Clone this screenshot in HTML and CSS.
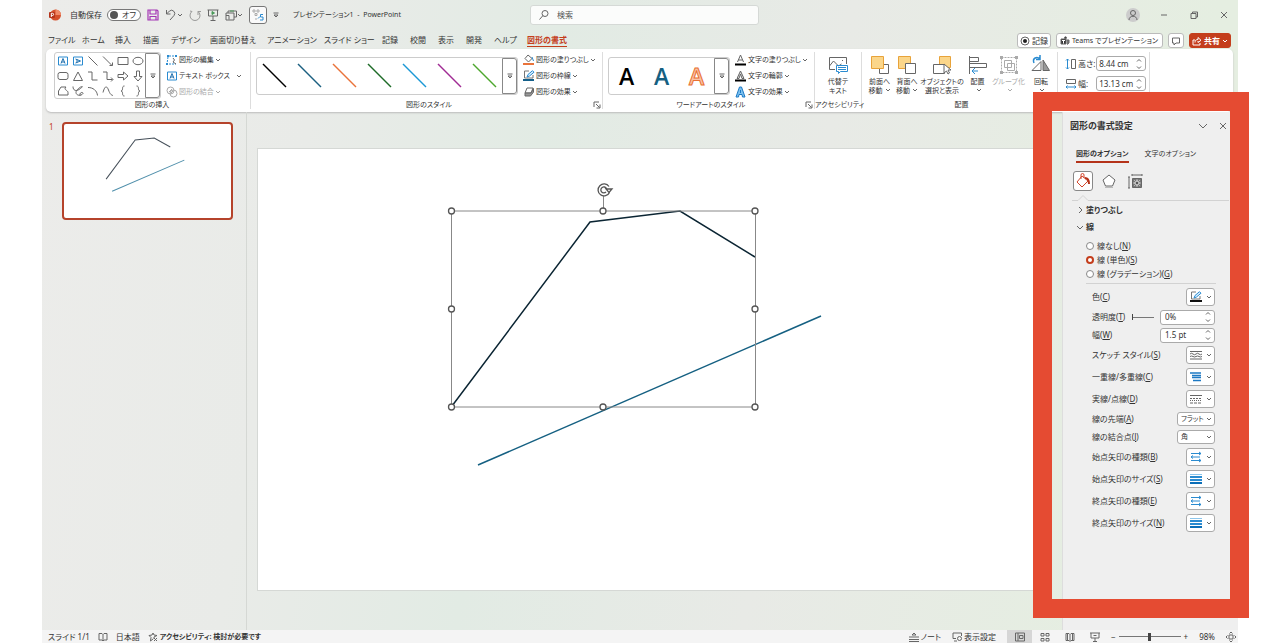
FILE: index.html
```html
<!DOCTYPE html>
<html lang="ja">
<head>
<meta charset="utf-8">
<title>プレゼンテーション1 - PowerPoint</title>
<link rel="stylesheet" href="styles.css">
</head>
<body>
<svg class="defs" width="0" height="0" aria-hidden="true">
  <symbol id="chev" viewBox="0 0 6 6"><path d="M1 2l2 2 2-2"/></symbol>
  <symbol id="more" viewBox="0 0 6 6"><path d="M.5 1h5M1 3l2 2 2-2z"/></symbol>
  <symbol id="spin" viewBox="0 0 6 12"><path d="M1 3.500l2-2 2 2M1 8.500l2 2 2-2"/></symbol>
  <symbol id="launch" viewBox="0 0 8 8"><path d="M1 6V1h5M3 3l3.500 3.500M7 3.500V7H3.500"/></symbol>
  <symbol id="sel-arrow" viewBox="0 0 12 12"><g fill="none" stroke="#2a8bd0"><path d="M1 2.500h10M1 6h9M1 9.500h10"/><path d="M9 1l2 1.500L9 4M3 4.500L1 6l2 1.500M9 8l2 1.500L9 11"/></g></symbol>
  <symbol id="sel-size" viewBox="0 0 12 12"><path fill="#8cc6ec" stroke="none" d="M0 1h12v1H0z"/><path fill="#2a8bd0" stroke="none" d="M0 3h12v2H0zM0 6h12v2H0z"/><path fill="#0c6fb8" stroke="none" d="M0 9h12v2H0z"/></symbol>
  <symbol id="pen" viewBox="0 0 12 12"><path d="M6 1H1.500v7H10V5" stroke="#777"/><path d="M4 7l1-2.500L9.500.7l1.500 1.500L6.500 6z" fill="#d9efff" stroke="#2a8bd0"/></symbol>
</svg>

<div class="app">
  <header class="titlebar">
    <div class="quick">
      <svg class="ic12 logo" viewBox="0 0 12 12"><circle cx="6.500" cy="6" r="5.500" fill="#d5502c" stroke="none"/><path d="M6.500.5A5.500 5.500 0 0 1 12 6H6.500z" fill="#f08a68" stroke="none"/><rect x="0" y="3" width="6" height="6" rx="1" fill="#b5331a" stroke="none"/><path d="M2.300 8V4.300h1.200a1 1 0 0 1 0 2.200H2.300" stroke="#fff"/></svg>
      <label class="autosave" for="auto">自動保存</label>
      <button class="toggle" id="auto" role="switch" aria-checked="false"><i></i><span>オフ</span></button>
      <button class="plain" aria-label="保存"><svg class="ic12" viewBox="0 0 12 12"><path d="M1 1h9l1 1v9H1zM3 1v4h6V1M3 11V7.500h6V11" stroke="#a436b5" stroke-width="1.200"/></svg></button>
      <button class="plain" aria-label="元に戻す"><svg class="ic12" viewBox="0 0 12 12"><path d="M1.500 1v4h4M1.500 5L4.500 2a3.200 3.200 0 0 1 4.500 4.500L5 11"/></svg><svg class="ic6"><use href="#chev"/></svg></button>
      <button class="plain" aria-label="やり直し"><svg class="ic12 dim" viewBox="0 0 12 12"><path d="M3 2.500a5 5 0 1 0 6 0M9 6V2.500h3M3 2.500L1 2"/></svg></button>
      <button class="plain" aria-label="最初から開始"><svg class="ic12" viewBox="0 0 12 12"><path d="M.5 1h11M1.500 1v6h9V1M6 7v4M3.500 11.500h5"/><path d="M5 2.500v3L7.500 4z" fill="#4a9a5a" stroke="#4a9a5a"/></svg></button>
      <button class="plain" aria-label="図形"><svg class="ic12" viewBox="0 0 12 12"><path d="M1 4h8v7H1zM3 4V2h8.500v6H9M1 6.500h3v4"/><path d="M5 2h4" stroke="#4a9a5a"/></svg><svg class="ic6"><use href="#chev"/></svg></button>
      <button class="boxed" aria-label="配置"><svg class="ic12" viewBox="0 0 12 12"><path d="M1 1h2v2H1zM5 1h2v2H5zM3 4.500h2v2H3z" stroke="#aaa"/><path d="M6 9.500l2-2M11 5.500H8.500v2.500H11v3H8" stroke="#2a8bd0"/><path d="M4 9v2" stroke="#aaa"/></svg></button>
      <button class="plain" aria-label="カスタマイズ"><svg class="ic6"><use href="#more"/></svg></button>
      <h1 class="doc">プレゼンテーション1&nbsp; -&nbsp; PowerPoint</h1>
    </div>
    <label class="search"><svg class="ic12" viewBox="0 0 12 12"><circle cx="7" cy="4.500" r="3"/><path d="M5 6.500L1.500 10.500"/></svg><input type="search" placeholder="検索" aria-label="検索"></label>
    <div class="wincontrols">
      <button class="avatar" aria-label="アカウント"><svg class="ic12" viewBox="0 0 12 12"><circle cx="6" cy="4" r="2.500"/><path d="M2 11c0-5 8-5 8 0"/></svg></button>
      <button class="plain" aria-label="最小化"><svg class="ic12" viewBox="0 0 12 12"><path d="M3 6h6"/></svg></button>
      <button class="plain" aria-label="元に戻す"><svg class="ic12" viewBox="0 0 12 12"><path d="M3 4.500h5v5H3zM4.500 4.500V3h5v5H8"/></svg></button>
      <button class="plain" aria-label="閉じる"><svg class="ic12" viewBox="0 0 12 12"><path d="M3 3l6 6M9 3L3 9"/></svg></button>
    </div>
  </header>

  <div class="tabrow">
    <nav class="tabs">
      <a href="#">ファイル</a><a href="#">ホーム</a><a href="#">挿入</a><a href="#">描画</a><a href="#">デザイン</a><a href="#">画面切り替え</a><a href="#">アニメーション</a><a href="#">スライド ショー</a><a href="#">記録</a><a href="#">校閲</a><a href="#">表示</a><a href="#">開発</a><a href="#">ヘルプ</a><a href="#" class="current">図形の書式</a>
    </nav>
    <div class="actions">
      <button><svg class="ic10" viewBox="0 0 10 10"><circle cx="5" cy="5" r="4"/><circle cx="5" cy="5" r="2" fill="#222" stroke="none"/></svg>記録</button>
      <button class="teams"><svg class="ic10" viewBox="0 0 10 10"><path d="M1 3h5v5H1z" fill="#333"/><circle cx="5.500" cy="1.800" r="1" fill="#333"/><path d="M6.500 4H9v3L7 8.500" fill="#777"/><path d="M2 4.500h3M3.500 4.500v3" stroke="#fff"/></svg>Teams でプレゼンテーション</button>
      <button aria-label="コメント"><svg class="ic10" viewBox="0 0 10 10"><path d="M1.500 2h7v5H5L3 9V7H1.500z"/></svg></button>
      <button class="share"><svg class="ic10" viewBox="0 0 10 10"><path d="M3 4H1v5h7V7M3 6.500c0-2 1-3 3-3V1.500L9 4.300 6 6.500V5"/></svg>共有<svg class="ic6"><use href="#chev"/></svg></button>
    </div>
  </div>

  <section class="ribbon">
    <div class="group g-insert">
      <div class="body">
        <div class="gallery shapes">
          <div class="shapegrid">
            <button aria-label="テキスト"><svg viewBox="0 0 12 12"><path d="M1.500 2h9v8h-9z" stroke="#2a8bd0"/><path d="M4 8.500L6 3.500l2 5M4.500 7h3" stroke="#1c6fae"/></svg></button>
            <button aria-label="縦書き"><svg viewBox="0 0 12 12"><path d="M1.500 2h9v8h-9z" stroke="#2a8bd0"/><path d="M3.500 4l5 2-5 2M5 4.500v3" stroke="#1c6fae"/></svg></button>
            <button aria-label="線"><svg viewBox="0 0 12 12"><path d="M1.500 1.500l9 9"/></svg></button>
            <button aria-label="矢印"><svg viewBox="0 0 12 12"><path d="M1 1.500l9 9M7.500 10.500H10.500V7.500"/></svg></button>
            <button aria-label="四角形"><svg viewBox="0 0 12 12"><path d="M1 2.500h10v7H1z"/></svg></button>
            <button aria-label="楕円"><svg viewBox="0 0 12 12"><ellipse cx="6" cy="6" rx="5" ry="3.700"/></svg></button>
            <button aria-label="角丸"><svg viewBox="0 0 12 12"><rect x="1" y="2.500" width="10" height="7" rx="2"/></svg></button>
            <button aria-label="三角形"><svg viewBox="0 0 12 12"><path d="M6 2l4.500 8.500h-9z"/></svg></button>
            <button aria-label="カギ線"><svg viewBox="0 0 12 12"><path d="M1 2h4v8h5.500"/></svg></button>
            <button aria-label="カギ線矢印"><svg viewBox="0 0 12 12"><path d="M1 2h4v7.500h5.500M9 7.500l2 2-2 2"/></svg></button>
            <button aria-label="右矢印"><svg viewBox="0 0 12 12"><path d="M1 4.500h5.500V2L11 6l-4.500 4V7.500H1z"/></svg></button>
            <button aria-label="下矢印"><svg viewBox="0 0 12 12"><path d="M4.500 1v5.500H2L6 11l4-4.500H7.500V1z"/></svg></button>
            <button aria-label="フリーフォーム"><svg viewBox="0 0 12 12"><path d="M4 2h5c-3 3 2 3 2 5.500V10H1.500V6z"/></svg></button>
            <button aria-label="フリーハンド"><svg viewBox="0 0 12 12"><path d="M1 1.500c0 4 3 5 6 3s4-3 3-3-6 3-6 6 5 4 7 1c0-2-4-1-3 2"/></svg></button>
            <button aria-label="円弧"><svg viewBox="0 0 12 12"><path d="M1 2.500c5 0 9 3 9.500 8"/></svg></button>
            <button aria-label="曲線"><svg viewBox="0 0 12 12"><path d="M1 7.500C3 0 5 1 6.500 5S9 10 11 10.500"/></svg></button>
            <button aria-label="左中かっこ"><svg viewBox="0 0 12 12"><path d="M7.500 1C4 1 7 5.500 4 6c3 .5 0 5 3.500 5"/></svg></button>
            <button aria-label="右中かっこ"><svg viewBox="0 0 12 12"><path d="M4.500 1C8 1 5 5.500 8 6c-3 .5 0 5-3.500 5"/></svg></button>
          </div>
          <button class="morebtn" aria-label="その他"><svg class="ic6"><use href="#more"/></svg></button>
        </div>
        <div class="cmds">
          <button><svg class="ic12" viewBox="0 0 12 12"><path d="M3 2h7M2 3L1 10M3 10h7" stroke="#2a8bd0" stroke-dasharray="2 1"/><path d="M7 4l1.500 2L7 8l3 2"/><path d="M1 1h2v2H1zM9 1h2v2H9zM0 9h2v2H0z" fill="#2a8bd0" stroke="none"/></svg>図形の編集<svg class="ic6"><use href="#chev"/></svg></button>
          <button class="wide"><svg class="ic12" viewBox="0 0 12 12"><path d="M1.500 2h9v8h-9z" stroke="#2a8bd0"/><path d="M4 8.500L6 3.500l2 5M4.500 7h3" stroke="#1c6fae"/></svg><span>テキスト ボックス</span><svg class="ic6"><use href="#chev"/></svg></button>
          <button class="off" disabled><svg class="ic12" viewBox="0 0 12 12"><circle cx="4.500" cy="4.500" r="3.500"/><circle cx="7.500" cy="7.500" r="3.500"/><path d="M4.500 7.500l3-3M3 6l3-3"/></svg>図形の結合<svg class="ic6"><use href="#chev"/></svg></button>
        </div>
      </div>
      <div class="caption">図形の挿入</div>
    </div>

    <div class="group g-style">
      <div class="body">
        <div class="gallery low">
          <button class="swatch" aria-label="黒"><svg viewBox="0 0 25 25"><path d="M1 1l23 23" stroke="#000"/></svg></button>
          <button class="swatch" aria-label="青"><svg viewBox="0 0 25 25"><path d="M1 1l23 23" stroke="#1a5f80"/></svg></button>
          <button class="swatch" aria-label="オレンジ"><svg viewBox="0 0 25 25"><path d="M1 1l23 23" stroke="#e9733a"/></svg></button>
          <button class="swatch" aria-label="緑"><svg viewBox="0 0 25 25"><path d="M1 1l23 23" stroke="#1d6b27"/></svg></button>
          <button class="swatch" aria-label="水色"><svg viewBox="0 0 25 25"><path d="M1 1l23 23" stroke="#1b98d5"/></svg></button>
          <button class="swatch" aria-label="紫"><svg viewBox="0 0 25 25"><path d="M1 1l23 23" stroke="#a02b93"/></svg></button>
          <button class="swatch" aria-label="黄緑"><svg viewBox="0 0 25 25"><path d="M1 1l23 23" stroke="#4ea72e"/></svg></button>
          <button class="morebtn" aria-label="その他"><svg class="ic6"><use href="#more"/></svg></button>
        </div>
        <div class="cmds">
          <button><svg class="ic12" viewBox="0 0 12 12"><path d="M5 1l4 3.500L5.500 8 2 4.500z"/><path d="M9 3l1.500 4" stroke="#2a8bd0"/><path d="M0 9h11v2H0z" fill="#e9733a" stroke="none"/></svg>図形の塗りつぶし<svg class="ic6"><use href="#chev"/></svg></button>
          <button><svg class="ic12" viewBox="0 0 12 12"><use href="#pen"/><path d="M0 9h11v2H0z" fill="#15608a" stroke="none"/></svg>図形の枠線<svg class="ic6"><use href="#chev"/></svg></button>
          <button><svg class="ic12" viewBox="0 0 12 12"><path d="M4 2h6L8 7H2z"/><path d="M2 7v3h5.500L10.500 6V2.500L8 7z" fill="#999"/></svg>図形の効果<svg class="ic6"><use href="#chev"/></svg></button>
        </div>
      </div>
      <div class="caption">図形のスタイル</div>
      <button class="launcher" aria-label="図形の書式設定"><svg><use href="#launch"/></svg></button>
    </div>

    <div class="group g-art">
      <div class="body">
        <div class="gallery low">
          <button class="art">A</button><button class="art blue">A</button><button class="art orange">A</button>
          <button class="morebtn" aria-label="その他"><svg class="ic6"><use href="#more"/></svg></button>
        </div>
        <div class="cmds">
          <button><svg class="ic12" viewBox="0 0 12 12"><path d="M2.500 8L5.500 1l3 7M3.500 6h4"/><path d="M0 9.500h11v2H0z" fill="#000" stroke="none"/></svg>文字の塗りつぶし<svg class="ic6"><use href="#chev"/></svg></button>
          <button><svg class="ic12" viewBox="0 0 12 12"><path d="M2 8.500L5.500 1 9 8.500H7L5.500 4 4 8.500z" fill="#ddd"/><path d="M0 9.500h11v2H0z" fill="#000" stroke="none"/></svg>文字の輪郭<svg class="ic6"><use href="#chev"/></svg></button>
          <button><svg class="ic12" viewBox="0 0 12 12"><path d="M1 11L4.500 1h2L10 11H7.500L7 8.500H4L3.500 11zM5.500 4v3" fill="#7cc1f0" stroke="#1c79c4"/></svg>文字の効果<svg class="ic6"><use href="#chev"/></svg></button>
        </div>
      </div>
      <div class="caption">ワードアートのスタイル</div>
      <button class="launcher" aria-label="文字の書式設定"><svg><use href="#launch"/></svg></button>
    </div>

    <div class="group g-alt">
      <div class="body">
        <button class="big"><svg viewBox="0 0 20 20"><path d="M18.500 9V2.500h-17v12H7M1.500 11l4-5 5 5 3-2M14 5.500h1"/><path d="M8.500 10.500h11v6h-7l-2 2v-2h-2zM10 12.500h8M10 14.500h8" stroke="#2a8bd0"/></svg><span>代替テ<br>キスト</span></button>
      </div>
      <div class="caption">アクセシビリティ</div>
    </div>

    <div class="group g-arrange">
      <div class="body">
        <button class="big"><svg viewBox="0 0 20 20"><path d="M9.500 9.500h9v9h-9z"/><path d="M1.500 1.500h12v12h-12z" fill="#fbd68a" stroke="#e8a33a"/></svg><span>前面へ<br>移動<svg class="ic6"><use href="#chev"/></svg></span></button>
        <button class="big"><svg viewBox="0 0 20 20"><path d="M1.500 1.500h12v12h-12z" fill="#fbd68a" stroke="#e8a33a"/><path d="M8.500 8.500h10v10h-10z" fill="#fff"/></svg><span>背面へ<br>移動<svg class="ic6"><use href="#chev"/></svg></span></button>
        <button class="big"><svg viewBox="0 0 20 20"><path d="M7.500 1.500h11v11h-11z" fill="#fbd68a" stroke="#e8a33a"/><path d="M1.500 9.500h11v9h-11z" fill="#fff"/><path d="M12 9v9l2.500-2 1.500 3 1.500-1-1.500-3h3z" fill="#fff"/></svg><span>オブジェクトの<br>選択と表示</span></button>
        <button class="big"><svg viewBox="0 0 20 20"><path d="M1.500 1v18M1.500 2.500h9v4h-9zM1.500 8.500h17v4h-17z"/><path d="M10 16H4M7 13l-3 3 3 3" stroke="#2a8bd0"/></svg><span>配置<br><svg class="ic6"><use href="#chev"/></svg></span></button>
        <button class="big off" disabled><svg viewBox="0 0 20 20"><path d="M2.500 2.500h15v15h-15z" stroke-dasharray="2 1"/><path d="M5.500 5.500h7v7h-7zM8.500 8.500h7v7h-7z"/><path d="M1 1h3v3H1zM16 1h3v3h-3zM1 16h3v3H1zM16 16h3v3h-3z" fill="#aaa" stroke="none"/></svg><span>グループ化<br><svg class="ic6"><use href="#chev"/></svg></span></button>
        <button class="big"><svg viewBox="0 0 20 20"><path d="M1 15.500h9v-9z"/><path d="M12 5v10.500h6.500z" fill="#999"/><path d="M3 8C1 3 6 1 9 4M9 0v4.500H5" stroke="#2a8bd0" stroke-width="1.500"/></svg><span>回転<br><svg class="ic6"><use href="#chev"/></svg></span></button>
      </div>
      <div class="caption">配置</div>
    </div>

    <div class="group g-size">
      <div class="sizes">
        <svg class="ic12" viewBox="0 0 12 12"><path d="M2.500 1v10M1 2.500L2.500 1 4 2.500M1 9.500L2.500 11 4 9.500" stroke="#2a8bd0"/><path d="M6.500 1.500h4v9h-4z"/></svg><label for="h">高さ:</label><span class="field"><input id="h" value="8.44 cm"><svg><use href="#spin"/></svg></span>
        <svg class="ic12" viewBox="0 0 12 12"><path d="M1.500 1.500h9v4h-9z"/><path d="M1 9h10M2.500 7.500L1 9l1.500 1.500M9.500 7.500L11 9l-1.500 1.500" stroke="#2a8bd0"/></svg><label for="w">幅:</label><span class="field"><input id="w" value="13.13 cm"><svg><use href="#spin"/></svg></span>
      </div>
    </div>
  </section>

  <main class="work">
    <aside class="thumbs">
      <span class="num">1</span>
      <button class="thumb" aria-label="スライド 1"><svg viewBox="64 124 167 94"><path d="M106 179l29-39 19-2 16 9" stroke="#46505a"/><path d="M112 191l72-31" stroke="#4f8fab"/></svg></button>
    </aside>

    <section class="canvas">
      <svg class="slide" viewBox="258 149 784 441">
        <path d="M478 465L821 316" stroke="#156082" stroke-width="1.500"/>
        <path d="M452 406L590 222l90-11 75 46" stroke="#0b2533" stroke-width="1.500"/>
        <path d="M451.500 211h304v196h-304zM603.500 196v15" stroke="#888"/>
        <g class="handles"><circle cx="451.500" cy="211" r="3"/><circle cx="603" cy="211" r="3"/><circle cx="755" cy="211" r="3"/><circle cx="451.500" cy="309" r="3"/><circle cx="755" cy="309" r="3"/><circle cx="451.500" cy="407" r="3"/><circle cx="603" cy="407" r="3"/><circle cx="755" cy="407" r="3"/></g>
        <path d="M609 186.500a6 6 0 1 0 .5 6M606.500 188.500a3 3 0 1 0-.5 3.500M606 189h6l-3 3.500z" stroke="#555" stroke-width="1.300"/>
      </svg>
    </section>

    <aside class="pane">
      <div class="panehead"><h2>図形の書式設定</h2>
        <button class="plain" aria-label="オプション"><svg class="ic12" viewBox="0 0 12 12"><path d="M2 4l4 4 4-4"/></svg></button>
        <button class="plain" aria-label="閉じる"><svg class="ic12" viewBox="0 0 12 12"><path d="M3 3l6 6M9 3L3 9"/></svg></button>
      </div>
      <div class="panetabs"><button class="current">図形のオプション</button><button>文字のオプション</button></div>
      <div class="panekinds">
        <button class="on" aria-label="塗りつぶしと線"><svg viewBox="0 0 16 16"><path d="M7 3l6 5-6 6-5-5zM6 6V2a1.500 1.500 0 0 1 3 0v3" stroke="#d2452a"/><path d="M10 5c3 0 4 2 4 6" stroke="#b5331a" stroke-width="2"/></svg></button>
        <button aria-label="効果"><svg viewBox="0 0 16 16"><path d="M8 2l6 5-2.500 6h-7L2 7z" fill="#fff"/><path d="M4 14.500h8" stroke="#bbb"/></svg></button>
        <button aria-label="サイズ"><svg viewBox="0 0 16 16"><path d="M2 4v11M1 4h2M1 15h2M5 2h10M5 1v2M15 1v2"/><path d="M5.500 5.500h9v9h-9z" fill="#777"/><path d="M10 6.500v7M6.500 10h7M7.500 7.500l1 1M12.500 7.500l-1 1M7.500 12.500l1-1M12.500 12.500l-1-1" stroke="#fff"/><path d="M9 9h2v2H9z" fill="#555" stroke="none"/></svg></button>
      </div>
      <svg class="notch" viewBox="0 0 160 6" preserveAspectRatio="xMinYMid slice"><path d="M0 5.500h6L11 .5l5 5h144" stroke="#d2d2d2"/></svg>
      <button class="section"><svg class="ic8" viewBox="0 0 8 8"><path d="M3 1l3 3-3 3"/></svg>塗りつぶし</button>
      <button class="section"><svg class="ic8" viewBox="0 0 8 8"><path d="M1 3l3 3 3-3"/></svg>線</button>
      <div class="radios">
        <label><input type="radio" name="ln"><span>線なし(<u>N</u>)</span></label>
        <label><input type="radio" name="ln" checked><span>線 (単色)(<u>S</u>)</span></label>
        <label><input type="radio" name="ln"><span>線 (グラデーション)(<u>G</u>)</span></label>
      </div>
      <div class="props">
        <div class="row"><label for="p1">色(<u>C</u>)</label><button id="p1" class="drop"><svg class="ic12" viewBox="0 0 12 12"><use href="#pen"/><path d="M0 9h12v2H0z" fill="#111" stroke="none"/></svg><svg class="ic6"><use href="#chev"/></svg></button></div>
        <div class="row short"><label for="p2">透明度(<u>T</u>)</label><input class="mini" type="range" min="0" max="100" value="0" aria-label="透明度"><span class="field"><input id="p2" value="0%"><svg><use href="#spin"/></svg></span></div>
        <div class="row short"><label for="p3">幅(<u>W</u>)</label><span class="field"><input id="p3" value="1.5 pt"><svg><use href="#spin"/></svg></span></div>
        <div class="row"><label for="p4">スケッチ スタイル(<u>S</u>)</label><button id="p4" class="drop"><svg class="ic12" viewBox="0 0 12 12"><path d="M0 2.500h12M0 5q1.500-1.500 3 0t3 0 3 0 3 0M0 7.500q1.500-1 3 0t3 0 3 0 3 0M0 10h12"/></svg><svg class="ic6"><use href="#chev"/></svg></button></div>
        <div class="row"><label for="p5">一重線/多重線(<u>C</u>)</label><button id="p5" class="drop"><svg class="ic12" viewBox="0 0 12 12"><path d="M0 2h11M2 4.500h9M2 6.500h9M3 9.500h8" stroke="#1c79c4" stroke-width="1.500"/></svg><svg class="ic6"><use href="#chev"/></svg></button></div>
        <div class="row"><label for="p6">実線/点線(<u>D</u>)</label><button id="p6" class="drop"><svg class="ic12" viewBox="0 0 12 12"><path d="M0 2.500h12"/><path d="M0 5.500h12" stroke-dasharray="2 1"/><path d="M0 7.500h12" stroke-dasharray="1 1"/><path d="M0 10h12" stroke-dasharray="3 1"/></svg><svg class="ic6"><use href="#chev"/></svg></button></div>
        <div class="row short"><label for="p7">線の先端(<u>A</u>)</label><span class="pick"><select id="p7"><option>フラット</option></select><svg class="ic6"><use href="#chev"/></svg></span></div>
        <div class="row short"><label for="p8">線の結合点(<u>J</u>)</label><span class="pick"><select id="p8"><option>角</option></select><svg class="ic6"><use href="#chev"/></svg></span></div>
        <div class="row"><label for="p9">始点矢印の種類(<u>B</u>)</label><button id="p9" class="drop"><svg class="ic12"><use href="#sel-arrow"/></svg><svg class="ic6"><use href="#chev"/></svg></button></div>
        <div class="row"><label for="p10">始点矢印のサイズ(<u>S</u>)</label><button id="p10" class="drop"><svg class="ic12"><use href="#sel-size"/></svg><svg class="ic6"><use href="#chev"/></svg></button></div>
        <div class="row"><label for="p11">終点矢印の種類(<u>E</u>)</label><button id="p11" class="drop"><svg class="ic12"><use href="#sel-arrow"/></svg><svg class="ic6"><use href="#chev"/></svg></button></div>
        <div class="row"><label for="p12">終点矢印のサイズ(<u>N</u>)</label><button id="p12" class="drop"><svg class="ic12"><use href="#sel-size"/></svg><svg class="ic6"><use href="#chev"/></svg></button></div>
      </div>
    </aside>
  </main>

  <footer class="status">
    <div class="left">
      <span>スライド 1/1</span>
      <svg class="ic10" viewBox="0 0 10 10"><path d="M1 1.500h3L5 2.500l1-1h3v6.500H6L5 9 4 8H1zM5 2.500V9"/></svg>
      <span>日本語</span>
      <button class="plain strong"><svg class="ic10" viewBox="0 0 10 10"><path d="M5 1l1 2 3 .5-3 1.500v2M5 1L4 3 1 3.500l2 2L2.500 9 5 7M6 6l3 3M9 6L6 9"/></svg>アクセシビリティ: 検討が必要です</button>
    </div>
    <div class="right">
      <button class="plain"><svg class="ic10" viewBox="0 0 10 10"><path d="M0 5h10M0 7.500h10M0 9.500h10M3 3l2-2 2 2z"/></svg>ノート</button>
      <button class="plain"><svg class="ic10" viewBox="0 0 10 10"><path d="M4 6.500H1V1h8.500v3M2 9h3"/><circle cx="7.500" cy="6.500" r="2" /></svg>表示設定</button>
      <div class="views">
        <button class="active" aria-label="標準"><svg class="ic10" viewBox="0 0 10 10"><path d="M.5 1h9v8h-9zM3 1v8M4.500 3.500h3.500v3H4.500z"/></svg></button>
        <button aria-label="一覧"><svg class="ic10" viewBox="0 0 10 10"><path d="M1 1.500h3v2.500H1zM6 1.500h3v2.500H6zM1 6.500h3v2.500H1zM6 6.500h3v2.500H6z"/></svg></button>
        <button aria-label="閲覧"><svg class="ic10" viewBox="0 0 10 10"><path d="M1 1.500h3L5 2.500l1-1h3v7H6L5 9.500l-1-1H1zM5 2.500V9M2.500 2v6M7.500 2v6"/></svg></button>
        <button aria-label="スライド ショー"><svg class="ic10" viewBox="0 0 10 10"><path d="M0 1h10M1 1v5h8V1M5 6v3M3 9.500h4M3.500 3.500h3"/></svg></button>
        <div class="zoom"><button class="plain">−</button><input type="range" aria-label="ズーム" value="50"><button class="plain">+</button></div>
      </div>
      <span>98%</span>
      <button class="plain" aria-label="画面に合わせる"><svg class="ic10" viewBox="0 0 10 10"><path d="M3 3h4v4H3zM3.500 1.500L5 0l1.500 1.500M3.500 8.500L5 10l1.500-1.500M1.500 3.500L0 5l1.500 1.500M8.500 3.500L10 5 8.500 6.500"/></svg></button>
    </div>
  </footer>
  <div class="highlight"></div>
</div>
</body>
</html>
```
FILE: styles.css
```css
* { box-sizing: border-box; }
body {
  margin: 0;
  background: #fff;
  color: #333;
  font: 8px/10px "Noto Sans", "Noto Sans CJK JP", sans-serif;
  font-feature-settings: "palt";
  overflow: hidden;
}
button, input, select { font: inherit; color: inherit; font-feature-settings: inherit; margin: 0; padding: 0; border: 0; background: none; }
button { display: flex; align-items: center; justify-content: center; white-space: nowrap; }
label, span { white-space: nowrap; }
a { color: inherit; text-decoration: none; }
h1, h2 { margin: 0; font-size: 7px; font-weight: 400; white-space: nowrap; }
svg { display: block; flex: none; fill: none; stroke: #666; stroke-width: 1; }
.defs { position: absolute; }
.ic6 { width: 6px; height: 6px; }
.ic8 { width: 8px; height: 8px; }
.ic10 { width: 10px; height: 10px; }
.ic12 { width: 12px; height: 12px; }
.dim { opacity: .6; }

.app {
  position: relative;
  display: flex;
  flex-direction: column;
  height: 100vh;
  margin: 0 42px;
  background: linear-gradient(100deg, #ececea 0%, #e9ebe8 22%, #e2ebe4 40%, #e8eae6 62%, #e5eee1 90%);
}

.titlebar { display: flex; align-items: center; height: 30px; flex: none; }
.quick { display: flex; align-items: center; gap: 6px; width: 488px; padding-left: 7px; }
.logo { margin-right: 3px; }
.autosave { margin-right: -1px; }
.toggle { justify-content: flex-start; gap: 4px; width: 34px; height: 12px; padding: 0 2px; border: 1px solid #777; border-radius: 6px; background: #fff; }
.toggle i { width: 8px; height: 8px; border-radius: 50%; background: #555; }
.boxed { width: 18px; height: 18px; border: 1px solid #777; border-radius: 3px; background: #fafafa; }
.doc { padding-left: 8px; }
.search { display: flex; align-items: center; gap: 7px; width: 229px; height: 20px; padding: 0 7px; border: 1px solid #d5d9d6; border-radius: 3px; background: #fbfcfb; }
.search input { flex: 1; min-width: 0; outline: 0; appearance: none; }
.search input::placeholder { color: #555; opacity: 1; }
.wincontrols { display: flex; align-items: center; gap: 18px; margin-left: auto; padding-right: 8px; }
.avatar { width: 14px; height: 14px; border-radius: 50%; background: #ccc; }

.tabrow { display: flex; align-items: center; justify-content: space-between; height: 19px; flex: none; padding: 2px 7px 0 6px; }
.tabs { display: grid; grid-template-columns: 34px 33px 28px 28px 39px 57px 57px 58px 28px 28px 28px 28px 33px auto; white-space: nowrap; }
.tabs a { justify-self: start; border-bottom: 1px solid transparent; line-height: 12px; }
.tabs .current { color: #c43e1c; border-color: #c43e1c; font-weight: 700; }
.actions { display: flex; gap: 5px; }
.actions button { gap: 2px; height: 15px; padding: 0 2px; border: 1px solid #bbb; border-radius: 3px; background: #fff; }
.actions .teams { padding: 0 4px 0 3px; font-size: 7px; }
.actions .share { border-color: #c43e1c; background: #c43e1c; color: #fff; font-weight: 700; }
.share svg { stroke: #fff; }

.ribbon { display: flex; flex: none; height: 63px; margin: 0 5px 0 4px; border-radius: 5px; background: #fff; box-shadow: 0 1px 2px #bbb; }
.group { position: relative; display: flex; flex-direction: column; flex: none; margin: 3px 0; border-right: 1px solid #ddd; }
.body { display: flex; align-items: center; height: 47px; flex: none; }
.caption { text-align: center; font-size: 7px; line-height: 12px; white-space: nowrap; }
.launcher { position: absolute; right: 1px; bottom: 0; }
.launcher svg { width: 8px; height: 8px; }
.g-insert { width: 205px; padding-left: 8px; }
.g-style { width: 352px; padding-left: 5px; }
.g-art { width: 212px; padding-left: 5px; }
.g-alt { width: 47px; }
.g-arrange { width: 196px; padding-left: 4px; }
.g-arrange .body { display: grid; grid-template-columns: 27px 28px 42px 29px 33px 32px; }
.g-size { width: 92px; }
.gallery { display: flex; height: 47px; border: 1px solid #ccc; border-radius: 3px; }
.low { height: 38px; }
.shapegrid { display: grid; grid-template-columns: repeat(6, 15px); }
.shapegrid svg { width: 12px; height: 12px; }
.morebtn { width: 15px; align-self: stretch; border: 1px solid #888; border-radius: 0 3px 3px 0; }
.swatch, .art { width: 35px; }
.swatch svg { width: 25px; height: 25px; stroke-width: 1.500; }
.art { font: 600 23px/30px "Open Sans", sans-serif; color: #000; }
.art.blue { color: #156082; }
.art.orange { color: #f9c3a7; -webkit-text-stroke: 1px #e97132; }
.cmds { display: flex; flex-direction: column; align-items: flex-start; gap: 4px; margin-left: 5px; font-size: 7px; }
.cmds button { gap: 1px; height: 12px; }
.cmds .wide { width: 76px; justify-content: flex-start; }
.wide span { flex: 1; text-align: left; }
.off { color: #aaa; }
.off svg { stroke: #aaa; }
.big { flex: 1 1 auto; flex-direction: column; gap: 2px; font-size: 7px; line-height: 9px; }
.big > svg { width: 20px; height: 20px; }
.big span { height: 19px; text-align: center; }
.big span svg { display: inline-block; margin-left: 2px; }
.sizes { display: grid; grid-template-columns: 12px auto 50px; align-items: center; gap: 5px 1px; padding: 4px 4px 0 7px; }
.field { display: flex; align-items: center; height: 15px; padding: 0 3px 0 2px; border: 1px solid #aaa; border-radius: 3px; background: #fff; }
.field input { flex: 1; min-width: 0; width: 20px; }
.field svg { width: 6px; height: 12px; }

.work { display: flex; flex: 1; min-height: 0; }
.thumbs { display: flex; align-items: flex-start; gap: 8px; width: 205px; padding: 10px 13px 0 7px; border-right: 1px solid #d5d8d4; }
.num { color: #c43e1c; }
.thumb { flex: 1; border: 2px solid #b5432b; border-radius: 4px; background: #fff; }
.thumb svg { width: 100%; }
.canvas { flex: 1; min-width: 0; padding: 37px 20px 0 11px; }
.slide { width: 100%; background: #fff; outline: 1px solid #d5d8d5; }
.handles { fill: #fff; stroke: #555; stroke-width: 1.300; }

.pane { width: 176px; flex: none; padding: 8px 9px 0 7px; border-left: 1px solid #ddd; background: #efefef; }
.panehead { display: flex; align-items: center; gap: 8px; height: 12px; }
.panehead h2 { flex: 1; font-size: 9px; font-weight: 700; }
.panetabs { display: flex; gap: 16px; margin: 14px 0 0 6px; font-size: 7px; }
.panetabs button { height: 17px; border-bottom: 2px solid transparent; }
.panetabs .current { border-color: #b5331a; font-weight: 700; }
.panekinds { display: flex; gap: 6px; margin: 8px 0 4px 3px; }
.panekinds button { width: 20px; height: 20px; border: 1px solid transparent; border-radius: 3px; }
.panekinds .on { border-color: #888; background: #fff; }
.panekinds svg { width: 16px; height: 16px; }
.notch { width: calc(100% - 2px); height: 6px; margin-left: 2px; }
.section { gap: 2px; height: 17px; margin-left: 6px; font-weight: 700; }
.radios { margin: 4px 13px 2px 16px; padding-bottom: 2px; border-bottom: 1px solid #d2d2d2; }
.radios label { display: flex; align-items: center; gap: 3px; height: 14px; }
.radios input { appearance: none; width: 8px; height: 8px; border: 1px solid #888; border-radius: 50%; background: #fff; }
.radios input:checked { border: 2px solid #c43e1c; }
.props { display: flex; flex-direction: column; gap: 4px; padding: 2px 14px 0 22px; }
.row { display: flex; align-items: center; justify-content: space-between; height: 18px; }
.short { height: 14px; }
.drop { gap: 4px; width: 29px; height: 18px; border: 1px solid #aaa; border-radius: 3px; background: #fff; }
.row .field { width: 55px; padding-left: 4px; }
.pick { position: relative; width: 38px; height: 14px; }
.pick select { appearance: none; width: 100%; height: 100%; padding-left: 3px; border: 1px solid #aaa; border-radius: 3px; background: #fff; font-size: 7px; }
.pick svg { position: absolute; right: 3px; top: 4px; pointer-events: none; }
input[type="range"] { appearance: none; height: 8px; background: linear-gradient(#777, #777) center / 100% 1px no-repeat; }
input[type="range"]::-webkit-slider-thumb { appearance: none; width: 3px; height: 8px; background: #444; }
input.mini { width: 22px; }
input.mini::-webkit-slider-thumb { width: 1px; height: 6px; }

.status { display: flex; align-items: center; justify-content: space-between; height: 13px; flex: none; padding: 0 2px 0 6px; background: #f4f4f4; }
.left, .right { display: flex; align-items: center; gap: 11px; }
.left { gap: 8px; }
.status button { gap: 2px; }
.status .strong { font-size: 7px; font-weight: 700; }
.views { display: flex; align-items: center; }
.views > button { width: 25px; height: 13px; }
.views .active { background: #d6d6d6; }
.zoom { display: flex; align-items: center; gap: 3px; padding-left: 4px; }
.zoom input { width: 62px; }

.highlight { position: absolute; top: 92px; right: -11px; width: 216px; height: 526px; border: 19px solid #e54b32; pointer-events: none; }
```
